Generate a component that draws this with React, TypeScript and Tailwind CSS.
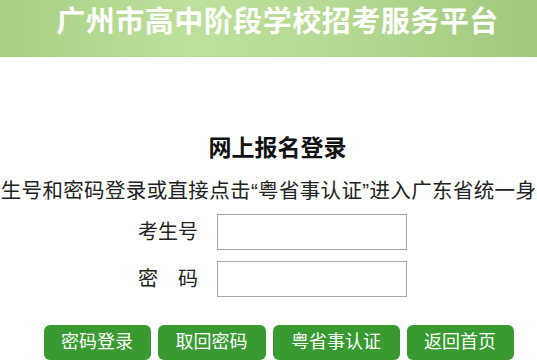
const BUTTONS = [
  { label: "密码登录", width: "w-[107px]" },
  { label: "取回密码", width: "w-[108px]" },
  { label: "粤省事认证", width: "w-[127px]" },
  { label: "返回首页", width: "w-[107px]" },
];

const FONT = { fontFamily: '"Liberation Sans", "Noto Sans CJK SC", sans-serif' };

export default function App() {
  return (
    <div className="h-[364px] w-[537px] overflow-hidden bg-white" style={FONT}>
      {/* banner */}
      <header className="flex h-[57px] items-start justify-center bg-[linear-gradient(90deg,#a8cf84_0%,#bde09a_35%,#b6da93_60%,#a2c97d_100%)] pl-[18px]">
        <h1 className="mt-[4px] text-[29px] font-bold leading-[36px] tracking-[0.5px] text-white">
          广州市高中阶段学校招考服务平台
        </h1>
      </header>

      <main className="flex flex-col items-center">
        <h2 className="mt-[76px] pl-[18px] text-[23px] font-bold leading-[30px] text-[#111]">
          网上报名登录
        </h2>

        <p className="mt-[14px] w-full whitespace-nowrap text-center text-[20.5px] leading-[28px] tracking-[0.35px] text-[#222]">
          生号和密码登录或直接点击“粤省事认证”进入广东省统一身
        </p>

        <div className="mt-[9px] flex flex-col gap-[11px] pl-[8px]">
          <label className="flex items-center">
            <span className="w-[79px] text-[20px] text-[#222]">考生号</span>
            <input className="h-[36px] w-[190px] border border-[#a9a9a9] bg-white outline-none" />
          </label>
          <label className="flex items-center">
            <span className="flex w-[79px] justify-between pr-[19px] text-[20px] text-[#222]">
              <span>密</span>
              <span>码</span>
            </span>
            <input type="password" className="h-[36px] w-[190px] border border-[#a9a9a9] bg-white outline-none" />
          </label>
        </div>

        <div className="mt-[28px] flex gap-[7px] pl-[20px]">
          {BUTTONS.map((b) => (
            <button
              key={b.label}
              className={`h-[35px] ${b.width} rounded-[6px] bg-[#389a31] text-[18px] leading-[35px] text-white`}
            >
              {b.label}
            </button>
          ))}
        </div>
      </main>
    </div>
  );
}
